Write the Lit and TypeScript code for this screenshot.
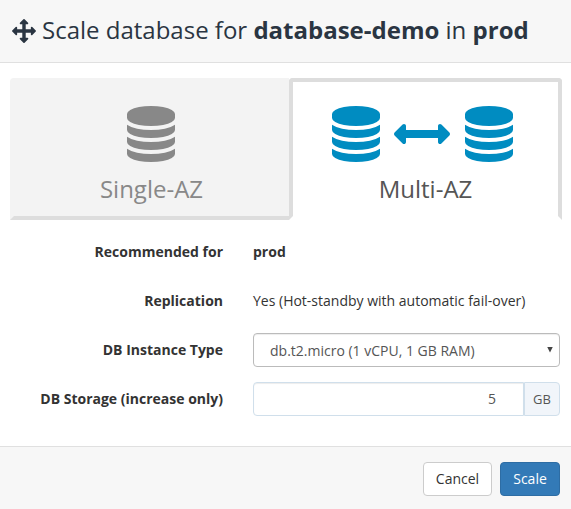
import { LitElement, html, css, svg } from "lit";
import { customElement, property, state } from "lit/decorators.js";

const ICONS: Record<string, { width: number; path: string }> = {
  move: {
    width: 1792,
    path: "M1792 896q0 26-19 45l-256 256q-19 19-45 19t-45-19-19-45v-128h-384v384h128q26 0 45 19t19 45-19 45l-256 256q-19 19-45 19t-45-19l-256-256q-19-19-19-45t19-45 45-19h128v-384h-384v128q0 26-19 45t-45 19-45-19l-256-256q-19-19-19-45t19-45l256-256q19-19 45-19t45 19 19 45v128h384v-384h-128q-26 0-45-19t-19-45 19-45l256-256q19-19 45-19t45 19l256 256q19 19 19 45t-19 45-45 19h-128v384h384v-128q0-26 19-45t45-19 45 19l256 256q19 19 19 45z",
  },
  database: {
    width: 1536,
    path: "M768 768q237 0 443-43t325-127v170q0 69-103 128t-280 93.5-385 34.5-385-34.5-280-93.5-103-128v-170q119 84 325 127t443 43zm0 768q237 0 443-43t325-127v170q0 69-103 128t-280 93.5-385 34.5-385-34.5-280-93.5-103-128v-170q119 84 325 127t443 43zm0-384q237 0 443-43t325-127v170q0 69-103 128t-280 93.5-385 34.5-385-34.5-280-93.5-103-128v-170q119 84 325 127t443 43zm0-1152q208 0 385 34.5t280 93.5 103 128v128q0 69-103 128t-280 93.5-385 34.5-385-34.5-280-93.5-103-128v-128q0-69 103-128t280-93.5 385-34.5z",
  },
  sync: {
    width: 1792,
    path: "M1792 896q0 26-19 45l-256 256q-19 19-45 19t-45-19-19-45v-128h-1024v128q0 26-19 45t-45 19-45-19l-256-256q-19-19-19-45t19-45l256-256q19-19 45-19t45 19 19 45v128h1024v-128q0-26 19-45t45-19 45 19l256 256q19 19 19 45z",
  },
};

@customElement("ui-icon")
export class UiIcon extends LitElement {
  @property() name = "database";

  static styles = css`
    :host {
      display: block;
      flex: none;
    }
    .glyph {
      display: block;
      height: 1em;
      width: auto;
      fill: currentColor;
    }
  `;

  render() {
    const icon = ICONS[this.name];
    return html`<svg class="glyph" viewBox="0 0 ${icon.width} 1792">${svg`<path d=${icon.path}></path>`}</svg>`;
  }
}

@customElement("app-root")
export class AppRoot extends LitElement {
  @state() private storage = 5;

  static styles = css`
    :host {
      display: flex;
      flex-direction: column;
      box-sizing: border-box;
      height: 100vh;
      background: #fff;
      color: #333;
      font: 14px/20px "Open Sans", sans-serif;
      overflow: hidden;
    }
    .header {
      box-sizing: border-box;
      flex: none;
      height: 63px;
      display: flex;
      align-items: center;
      gap: 6px;
      padding: 0 12px 1px;
      background: #f7f7f7;
      border-bottom: 1px solid #e0e0e0;
      color: #2a3542;
    }
    .move {
      font-size: 24px;
    }
    .title {
      margin: 0;
      padding-bottom: 1px;
      font-size: 24px;
      line-height: 34px;
      font-weight: 400;
      white-space: nowrap;
    }
    .title b {
      font-weight: 700;
    }
    .body {
      flex: 1;
      padding: 15px 9px 0 10px;
    }
    .tabs {
      display: grid;
      grid-template-columns: 279px 273px;
      height: 142px;
    }
    .tab {
      box-sizing: border-box;
      display: flex;
      flex-direction: column;
      align-items: center;
      padding-top: 24px;
      border: 4px solid transparent;
      border-radius: 4px 4px 0 0;
      font-size: 24px;
      line-height: 34px;
    }
    .single {
      background: #f3f3f3;
      color: #888;
      border-right: 0;
      border-bottom-color: #ddd;
      border-top-right-radius: 0;
    }
    .multi {
      color: #555;
      border-color: #ddd;
      border-bottom-color: transparent;
    }
    .icons {
      display: flex;
      gap: 14.5px;
      font-size: 56px;
      margin-bottom: 10px;
    }
    .single .icons {
      margin-right: 0.6px;
    }
    .multi .icons {
      color: #008cc1;
      margin-right: 6.4px;
    }
    .form {
      display: grid;
      grid-template-columns: 213px 307px;
      grid-auto-rows: 34px;
      gap: 15px 30px;
      align-items: center;
      margin-top: 15px;
    }
    .label {
      text-align: right;
      font-weight: 700;
      white-space: nowrap;
    }
    .strong {
      font-weight: 700;
    }
    .select {
      box-sizing: border-box;
      height: 34px;
      display: flex;
      align-items: center;
      justify-content: space-between;
      padding: 2px 6px 0 16px;
      border: 1px solid #bbb;
      border-radius: 4px;
      box-shadow: inset 0 1px 1px rgba(0, 0, 0, 0.075);
      color: #555;
    }
    .caret {
      width: 6px;
      height: 6px;
      margin-bottom: 3px;
      background: #444;
      clip-path: polygon(0 0, 100% 0, 50% 100%);
    }
    .group {
      display: flex;
      height: 34px;
    }
    .input {
      box-sizing: border-box;
      flex: 1;
      min-width: 0;
      border: 1px solid #d0dfeb;
      border-radius: 4px 0 0 4px;
      box-shadow: inset 0 1px 1px rgba(0, 0, 0, 0.075);
      padding: 0 27px 0 12px;
      background: #fff;
      color: #555;
      font: 14px/20px "Open Sans", sans-serif;
      text-align: right;
    }
    .unit {
      box-sizing: border-box;
      width: 36px;
      display: flex;
      align-items: center;
      justify-content: center;
      padding-bottom: 1px;
      border: 1px solid #d0dfeb;
      border-radius: 0 4px 4px 0;
      background: #f1f5fa;
      color: #555;
      font-size: 13px;
    }
    .footer {
      box-sizing: border-box;
      flex: none;
      height: 63px;
      display: flex;
      gap: 8px;
      justify-content: flex-end;
      padding: 15px 11px 0 0;
      border-top: 1px solid #e0e0e0;
      background: #f7f7f7;
    }
    .button {
      box-sizing: border-box;
      height: 34px;
      width: 69px;
      padding: 0;
      border: 1px solid #ccc;
      border-radius: 4px;
      background: #fff;
      color: #333;
      font: 14px/20px "Open Sans", sans-serif;
    }
    .primary {
      width: 60px;
      background: #337ab7;
      border-color: #2e6da4;
      color: #fff;
    }
  `;

  private onStorage(event: Event) {
    this.storage = Number((event.target as HTMLInputElement).value);
  }

  render() {
    return html`
      <header class="header">
        <ui-icon class="move" name="move"></ui-icon>
        <h1 class="title">Scale database for <b>database-demo</b> in <b>prod</b></h1>
      </header>
      <main class="body">
        <div class="tabs">
          <div class="tab single">
            <div class="icons"><ui-icon name="database"></ui-icon></div>
            <span>Single-AZ</span>
          </div>
          <div class="tab multi">
            <div class="icons">
              <ui-icon name="database"></ui-icon>
              <ui-icon name="sync"></ui-icon>
              <ui-icon name="database"></ui-icon>
            </div>
            <span>Multi-AZ</span>
          </div>
        </div>
        <div class="form">
          <span class="label">Recommended for</span>
          <span class="strong">prod</span>
          <span class="label">Replication</span>
          <span>Yes (Hot-standby with automatic fail-over)</span>
          <span class="label">DB Instance Type</span>
          <div class="select"><span>db.t2.micro (1 vCPU, 1 GB RAM)</span><i class="caret"></i></div>
          <span class="label">DB Storage (increase only)</span>
          <div class="group">
            <input class="input" .value=${String(this.storage)} @input=${this.onStorage} />
            <span class="unit">GB</span>
          </div>
        </div>
      </main>
      <footer class="footer">
        <button class="button">Cancel</button>
        <button class="button primary">Scale</button>
      </footer>
    `;
  }
}
